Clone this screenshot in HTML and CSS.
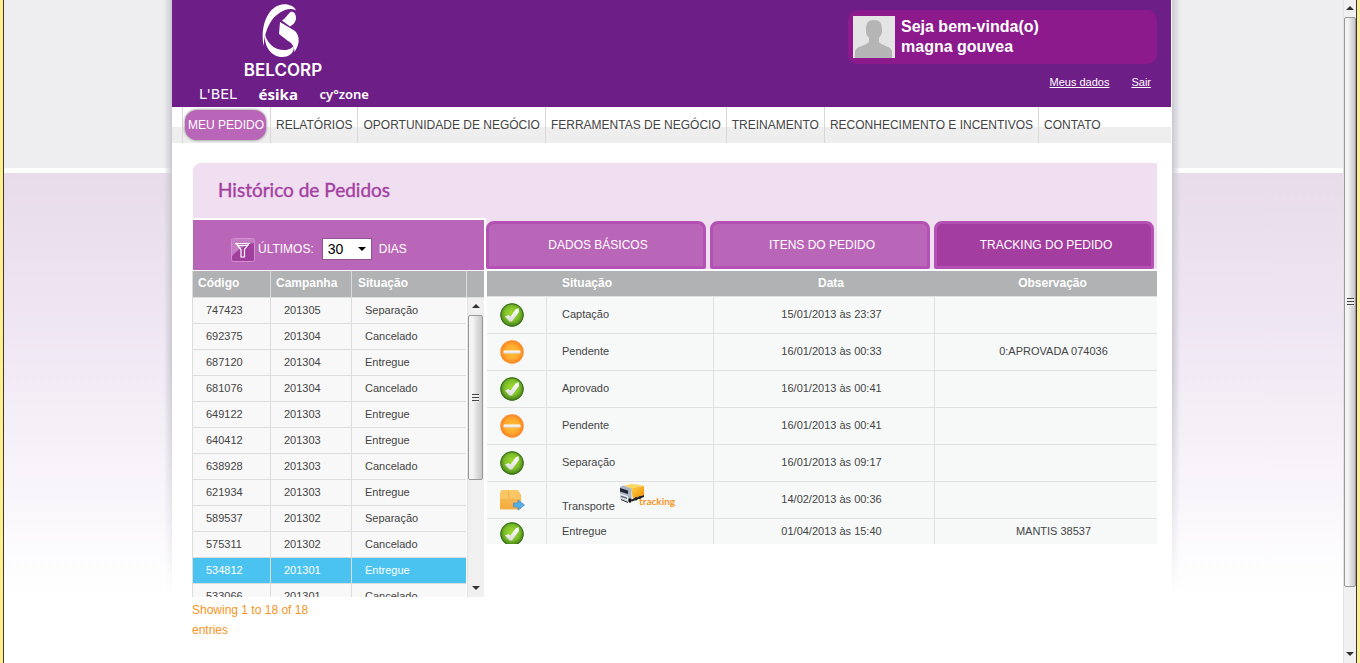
FILE: index.html
```html
<!DOCTYPE html>
<html lang="pt-BR">
<head>
<meta charset="utf-8">
<title>Histórico de Pedidos</title>
<link rel="stylesheet" href="styles.css">
</head>
<body>
<svg class="defs" width="0" height="0" aria-hidden="true">
  <defs>
    <radialGradient id="green" cx="50%" cy="45%" r="52%">
      <stop offset="0" stop-color="#a2dc30"/><stop offset=".6" stop-color="#7fc02a"/><stop offset="1" stop-color="#44801c"/>
    </radialGradient>
    <radialGradient id="orange" cx="50%" cy="50%" r="52%">
      <stop offset="0" stop-color="#ffc53a"/><stop offset=".6" stop-color="#ffa82e"/><stop offset="1" stop-color="#f87f1e"/>
    </radialGradient>
    <linearGradient id="silver" x1="0" y1="0" x2="0" y2="1">
      <stop offset="0" stop-color="#fff"/><stop offset="1" stop-color="#dcdcdc"/>
    </linearGradient>
    <linearGradient id="box" x1="0" y1="0" x2="0" y2="1">
      <stop offset="0" stop-color="#fbc45a"/><stop offset="1" stop-color="#f4ab3c"/>
    </linearGradient>
    <linearGradient id="cargo" x1="0" y1="0" x2="1" y2="1">
      <stop offset="0" stop-color="#ffd24a"/><stop offset="1" stop-color="#f08a00"/>
    </linearGradient>
  </defs>
  <symbol id="ok" viewBox="0 0 24 24">
    <circle cx="12" cy="12" r="11.7" fill="url(#green)"/>
    <circle cx="12" cy="12" r="11.2" fill="none" stroke="#3f701c" stroke-width="1"/>
    <path d="M5 13.5 8.5 12 10.5 13.5 15.5 6.5 18.5 5 19 9 12 18.5 9.5 18.5Z" fill="url(#silver)"/>
  </symbol>
  <symbol id="wait" viewBox="0 0 24 24">
    <circle cx="12" cy="12" r="11.7" fill="url(#orange)"/>
    <rect x="3.5" y="10.5" width="17" height="3" rx=".5" fill="url(#silver)"/>
  </symbol>
  <symbol id="parcel" viewBox="0 0 26 22">
    <path d="M1 1H18L21 6V20H0V5Z" fill="url(#box)"/>
    <path d="M1 1H18L20 10H0Z" fill="#fbcb6c" opacity=".7"/>
    <path d="M0 11H20M8 1 9.500 11 8 20M0 20H20" stroke="#f0b255" stroke-width="1" fill="none"/>
    <path d="M13.500 14H18V11L24.500 16 18 21V18H13.500Z" fill="#56aee6" stroke="#4790c8" stroke-width=".8"/>
  </symbol>
</svg>

<div class="frame">
  <main class="stage">
    <div class="site">
      <header class="top">
        <div class="brand">
          <svg class="brand-mark" viewBox="0 0 38 54" role="img" aria-label="Belcorp">
            <path d="M1.500 42C-2 22 6 1 22 .3C28 .3 33 3 34 6.500C31 4.500 27 4.500 23 6C10 11 3 24 1.500 42Z" fill="#fff"/>
            <path d="M20 16.500C24 14 26 10 28.500 8C31 7 34 9 34 14C34 18 31 21 28 22.500Z" fill="#fff"/>
            <path d="M18 18 33 27C38 32 38 40 32.500 48C32.500 43 30 39 26 37L17 30Z" fill="#fff"/>
            <path d="M3 31C6 40 13 46 22 46C27 46 30 44 31.500 42C33 48 28 53 20 53C10 53 2 43 3 31Z" fill="#fff"/>
          </svg>
          <strong class="brand-name">BELCORP</strong>
          <div class="sub-brands">
            <span class="lbel">L'BEL</span><span class="esika">ésika</span><span class="cyzone">cy°zone</span>
          </div>
        </div>
        <div class="account">
          <div class="welcome">
            <svg class="avatar" viewBox="0 0 42 42" role="img" aria-label="Foto do perfil">
              <rect width="42" height="42" fill="#e4e4e4"/>
              <path d="M2 42V35C3 30 13 30 16 26V22C14 20 13 18 13 16L13 14C13 7 15 4 21 4S29 7 29 14L29 16C29 18 27 20 26 22V26C29 30 38 30 39 35V42Z" fill="#b5b5b5"/>
            </svg>
            <p>Seja bem-vinda(o)<br>magna gouvea</p>
          </div>
          <div class="links"><a href="#">Meus dados</a><a href="#">Sair</a></div>
        </div>
      </header>

      <nav class="menu">
        <a class="current" href="#"><span>MEU PEDIDO</span></a>
        <a href="#">RELATÓRIOS</a>
        <a href="#">OPORTUNIDADE DE NEGÓCIO</a>
        <a href="#">FERRAMENTAS DE NEGÓCIO</a>
        <a href="#">TREINAMENTO</a>
        <a href="#">RECONHECIMENTO E INCENTIVOS</a>
        <a href="#">CONTATO</a>
      </nav>

      <section class="history">
        <h1>Histórico de Pedidos</h1>
        <div class="orders">
          <form class="filter">
            <svg class="filter-icon" viewBox="0 0 24 24" aria-hidden="true">
              <rect x=".5" y=".5" width="23" height="23" rx="2" fill="#a13f9f" stroke="#d48fd2"/>
              <path d="M1 1H23V5C14 6 7 12 1 18Z" fill="#c47cc2"/>
              <path d="M5 5.500H18L13.500 11.500V19H10V11.500Z" fill="none" stroke="#fff" stroke-width="1.200"/>
              <path d="M7 7.500H16" stroke="#fff" stroke-width="1" fill="none"/>
            </svg>
            <label for="days">ÚLTIMOS:</label>
            <span class="picker"><select id="days"><option>30</option><option>60</option><option>90</option></select></span>
            <span>DIAS</span>
          </form>
          <table class="list list-head">
            <colgroup><col class="c-code"><col class="c-camp"><col class="c-stat"><col></colgroup>
            <thead><tr><th>Código</th><th>Campanha</th><th>Situação</th><th></th></tr></thead>
          </table>
          <div class="scroller">
            <table class="list list-body">
              <colgroup><col class="c-code"><col class="c-camp"><col class="c-stat"></colgroup>
              <tbody>
                <tr><td>747423</td><td>201305</td><td>Separação</td></tr>
                <tr><td>692375</td><td>201304</td><td>Cancelado</td></tr>
                <tr><td>687120</td><td>201304</td><td>Entregue</td></tr>
                <tr><td>681076</td><td>201304</td><td>Cancelado</td></tr>
                <tr><td>649122</td><td>201303</td><td>Entregue</td></tr>
                <tr><td>640412</td><td>201303</td><td>Entregue</td></tr>
                <tr><td>638928</td><td>201303</td><td>Cancelado</td></tr>
                <tr><td>621934</td><td>201303</td><td>Entregue</td></tr>
                <tr><td>589537</td><td>201302</td><td>Separação</td></tr>
                <tr><td>575311</td><td>201302</td><td>Cancelado</td></tr>
                <tr class="selected"><td>534812</td><td>201301</td><td>Entregue</td></tr>
                <tr><td>533066</td><td>201301</td><td>Cancelado</td></tr>
              </tbody>
            </table>
            <div class="bar bar-list" aria-hidden="true"><i class="up"></i><div class="thumb"><b></b></div><i class="down"></i></div>
          </div>
          <p class="info">Showing 1 to 18 of 18 entries</p>
        </div>

        <div class="detail">
          <div class="tabs">
            <button type="button">DADOS BÁSICOS</button>
            <button type="button">ITENS DO PEDIDO</button>
            <button type="button" class="active">TRACKING DO PEDIDO</button>
          </div>
          <table class="track">
            <colgroup><col class="t-icon"><col class="t-stat"><col class="t-date"><col></colgroup>
            <thead><tr><th></th><th class="left">Situação</th><th>Data</th><th>Observação</th></tr></thead>
            <tbody>
              <tr><td><svg class="icon"><use href="#ok"/></svg></td><td>Captação</td><td>15/01/2013 às 23:37</td><td></td></tr>
              <tr><td><svg class="icon"><use href="#wait"/></svg></td><td>Pendente</td><td>16/01/2013 às 00:33</td><td>0:APROVADA 074036</td></tr>
              <tr><td><svg class="icon"><use href="#ok"/></svg></td><td>Aprovado</td><td>16/01/2013 às 00:41</td><td></td></tr>
              <tr><td><svg class="icon"><use href="#wait"/></svg></td><td>Pendente</td><td>16/01/2013 às 00:41</td><td></td></tr>
              <tr><td><svg class="icon"><use href="#ok"/></svg></td><td>Separação</td><td>16/01/2013 às 09:17</td><td></td></tr>
              <tr><td><svg class="icon parcel"><use href="#parcel"/></svg></td>
                <td><div class="transport"><span>Transporte</span>
                  <a href="#" class="tracking"><svg viewBox="0 0 56 26" role="img" aria-label="tracking">
                    <path d="M12 4 25 2V11L14 15Z" fill="url(#cargo)"/>
                    <path d="M5 1.500 13 0 25 1.500 12 4.500Z" fill="#ffd65e"/>
                    <path d="M1 3 4 1.500 12.500 4.500V15L10 18 1 14Z" fill="#aab2bf"/>
                    <path d="M1 4 9 6.500V10L1 7.500Z" fill="#1c2634"/>
                    <path d="M1 9.500 9 12V17L2 14Z" fill="#e6ebf2"/>
                    <path d="M2 11.500 8 13.500V15L2 13Z" fill="#5b6678"/>
                    <path d="M2 15 9 18V19L2 16ZM12 15.500 25 11V13L13 17.500Z" fill="#20242c"/>
                    <ellipse cx="11" cy="16.500" rx="1.600" ry="2.200" fill="#111"/><ellipse cx="17" cy="14.800" rx="1.500" ry="1.800" fill="#222"/><ellipse cx="21" cy="13.500" rx="1.400" ry="1.600" fill="#222"/>
                    <text x="20" y="21" class="tracking-word">tracking</text>
                  </svg></a></div></td>
                <td>14/02/2013 às 00:36</td><td></td></tr>
              <tr class="last"><td><div class="clip"><svg class="icon"><use href="#ok"/></svg></div></td><td>Entregue</td><td>01/04/2013 às 15:40</td><td>MANTIS 38537</td></tr>
            </tbody>
          </table>
        </div>
      </section>
    </div>
  </main>
  <div class="bar bar-page" aria-hidden="true"><i class="up"></i><div class="thumb"><b></b></div><i class="down"></i></div>
</div>
</body>
</html>
```
FILE: styles.css
```css
* { box-sizing: border-box; }
body {
  margin: 0;
  font: 12px/20px "Liberation Sans", Arial, sans-serif;
  color: #444;
  background: #fff;
}
h1, p { margin: 0; }
.defs { position: absolute; }

/* Window frame */
.frame {
  display: flex;
  min-height: 100vh;
  border: solid #ffee90;
  border-width: 0 3px;
}
.stage {
  flex: 1;
  min-width: 0;
  padding-right: 3px;
  border-left: 1px solid #3b3a2c;
  background:
    linear-gradient(#eeeef0, #eeeef0) 0 0 / 100% 168px no-repeat,
    linear-gradient(#e8dcea, #eee4f2 130px, #f7f3f9 290px, #fff 420px) 0 173px no-repeat,
    #fff;
}
.site {
  position: relative;
  max-width: 1000px;
  min-height: 100%;
  margin: 0 auto;
  background: #fff;
  border-right: 1px solid #fff;
}
.site::before, .site::after {
  content: "";
  position: absolute;
  top: 0;
  width: 8px;
  height: 600px;
  -webkit-mask-image: linear-gradient(#000 60%, transparent);
  mask-image: linear-gradient(#000 60%, transparent);
}
.site::before { right: 100%; background: linear-gradient(to left, #c9c8d2, #d5d4dd00); }
.site::after { left: 100%; margin-left: 1px; background: linear-gradient(to right, #c9c8d2, #d5d4dd00); }

/* Header */
.top {
  display: flex;
  justify-content: space-between;
  height: 107px;
  background: #6e1e87;
  color: #fff;
}
.brand {
  display: flex;
  flex-direction: column;
  align-items: center;
  width: 222px;
  padding-top: 4px;
}
.brand-mark { width: 38px; height: 54px; margin-right: 4px; }
.brand-name { font: 600 17px/20px Inter, sans-serif; margin-top: 2px; }
.sub-brands {
  display: flex;
  align-self: stretch;
  justify-content: space-between;
  align-items: center;
  height: 20px;
  margin: 4px 25px 0 27px;
}
.lbel { font: 14px/20px "DejaVu Sans", sans-serif; }
.esika { font: 700 15px/20px "Noto Sans", sans-serif; }
.cyzone { font: 600 13px/20px "Noto Sans", sans-serif; }
.account { width: 309px; margin: 10px 14px 0 0; }
.welcome {
  display: flex;
  gap: 6px;
  height: 54px;
  padding: 6px 5px;
  border-radius: 10px;
  background: #8c1a8c;
  font-weight: bold;
  font-size: 16px;
}
.welcome p { padding-top: 1px; }
.avatar { width: 42px; height: 42px; }
.links {
  display: flex;
  justify-content: flex-end;
  gap: 22px;
  padding: 8px 6px 0 0;
  font-size: 11px;
}
.links a { color: #fff; }

/* Menu */
.menu {
  display: flex;
  height: 36px;
  padding-left: 10px;
  background: linear-gradient(#fff 20px, #eee 20px);
}
.menu a {
  padding: 8px 5px 0;
  border-left: 1px solid #d8d8d8;
  color: #444;
  text-decoration: none;
  white-space: nowrap;
}
.menu a.current { padding: 3px 4px 0 2px; color: #fff; }
.menu span {
  display: block;
  height: 30px;
  padding: 0 2px 0 3px;
  border-radius: 12px;
  background: #ba66b8;
  box-shadow: 0 0 3px #666;
  line-height: 30px;
}

/* Order history */
.history {
  display: grid;
  grid-template-columns: 292px minmax(0, 1fr);
  column-gap: 2px;
  padding: 20px 14px 20px 20px;
}
h1 {
  grid-column: 1 / -1;
  height: 55px;
  margin-left: 1px;
  padding: 13px 25px 0;
  border-top-left-radius: 8px;
  background: #f0dff0;
  color: #a43fa2;
  font: 400 19px/28px Lato, sans-serif;
  -webkit-text-stroke: 0.4px #a43fa2;
}
.filter {
  display: flex;
  align-items: center;
  height: 50px;
  margin: 2px 0 1px 1px;
  padding: 8px 0 0 38px;
  background: #ba66b8;
  color: #fff;
}
.filter-icon { width: 24px; height: 24px; margin: 2px 3px 0 0; }
.picker {
  position: relative;
  margin: 0 7px 0 8px;
}
.picker::after {
  content: "";
  position: absolute;
  right: 6px;
  top: 9px;
  border: solid transparent;
  border-width: 4px 4px 0;
  border-top-color: #000;
}
select {
  display: block;
  appearance: none;
  width: 50px;
  height: 22px;
  padding: 0 5px;
  border: 1px solid #8f5590;
  border-radius: 0;
  background: #fff;
  color: #000;
  font: 14px/20px "Liberation Sans", Arial, sans-serif;
}

table { border-collapse: separate; border-spacing: 0; table-layout: fixed; }
th {
  height: 26px;
  padding: 0;
  background: #b0b2b3;
  color: #fff;
  font-weight: bold;
}
.c-code { width: 78px; }
.c-camp { width: 81px; }
.c-stat { width: 115px; }
.list th, .list td { border-left: 1px solid #dcdddd; text-align: left; }
.list-head { width: 100%; }
.list th { height: 27px; padding: 0 5px 3px; border-bottom: 1px solid #dcdddd; }
.list th:nth-child(3) { padding-left: 6px; }
.list-body { width: 274px; }
.list td {
  height: 26px;
  padding: 0 13px 2px;
  border-bottom: 1px solid #dcdddd;
  background: #f8f8f8;
  font-size: 11px;
}
.list .selected td { background: #4bc3f1; color: #fff; }
.scroller {
  display: flex;
  justify-content: space-between;
  align-items: stretch;
  height: 299px;
  overflow: hidden;
}
.info { width: 130px; padding-top: 3px; color: #f7941e; }

/* Scroll bars */
.bar {
  display: flex;
  flex-direction: column;
  flex: none;
  background: #f0f0f0;
  border-left: 1px solid #e2e2e2;
}
.bar i {
  align-self: center;
  border: solid transparent;
  border-width: 0 4px 4px;
  border-bottom-color: #333;
}
.bar .down { border-width: 4px 4px 0; border-top-color: #333; margin-top: auto; }
.thumb {
  display: grid;
  place-items: center;
  border: 1px solid #999;
  border-radius: 2px;
  background: linear-gradient(to right, #f4f4f4 30%, #dedee0 60%, #c8c8cb);
}
.thumb b {
  width: 7px;
  height: 8px;
  background: repeating-linear-gradient(#444 0 1px, #eee 1px 3px);
}
.bar-list { width: 17px; padding: 6px 1px 7px 0; border-left-width: 1px; }
.bar-list .thumb { height: 165px; margin-top: 7px; }
.bar-page {
  width: 14px;
  padding: 6px 0 7px;
  border-right: 1px solid #2b3347;
}
.bar-page .thumb { flex: 0 0 570px; margin-top: 7px; }

/* Order detail */
.tabs {
  display: grid;
  grid-template-columns: repeat(3, minmax(0, 1fr));
  gap: 4px;
  padding: 3px 3px 0 0;
  background: #f0dff0;
}
.tabs button {
  height: 48px;
  padding: 0 0 0 4px;
  border: 3px solid #b351b4;
  border-radius: 8px 8px 2px 2px;
  background: #ba66b8;
  color: #fff;
  font: 12px/20px "Liberation Sans", Arial, sans-serif;
}
.tabs .active { background: #a33d9f; }
.track { width: calc(100% - 1px); margin: 2px 0 0 1px; }
.t-icon { width: 60px; }
.t-stat { width: 167px; }
.t-date { width: 221px; }
.track th { padding: 0 0 2px 13px; height: 26px; border-bottom: 1px solid #e0e2e2; }
.track th.left { padding-left: 15px; text-align: left; }
.track td {
  height: 37px;
  padding: 0 0 2px 15px;
  border-right: 1px solid #e0e2e2;
  border-bottom: 1px solid #e0e2e2;
  background: #f7f9f9;
  font-size: 11px;
  text-align: center;
}
.track td:first-child { padding: 0 0 0 13px; text-align: left; }
.track td:nth-child(2) { text-align: left; }
.track td:last-child { border-right: 0; }
.track .last td { height: 25px; border-bottom: 0; }
.icon { display: block; width: 24px; height: 24px; }
.parcel { width: 26px; height: 22px; }
.clip { height: 22px; margin-top: 3px; overflow: hidden; }
.transport { display: flex; align-items: flex-end; gap: 4px; height: 33px; }
.tracking svg { display: block; width: 56px; height: 26px; margin-bottom: 6px; }
.tracking-word { font: 700 10px Lato, sans-serif; fill: #f7941e; }
```
